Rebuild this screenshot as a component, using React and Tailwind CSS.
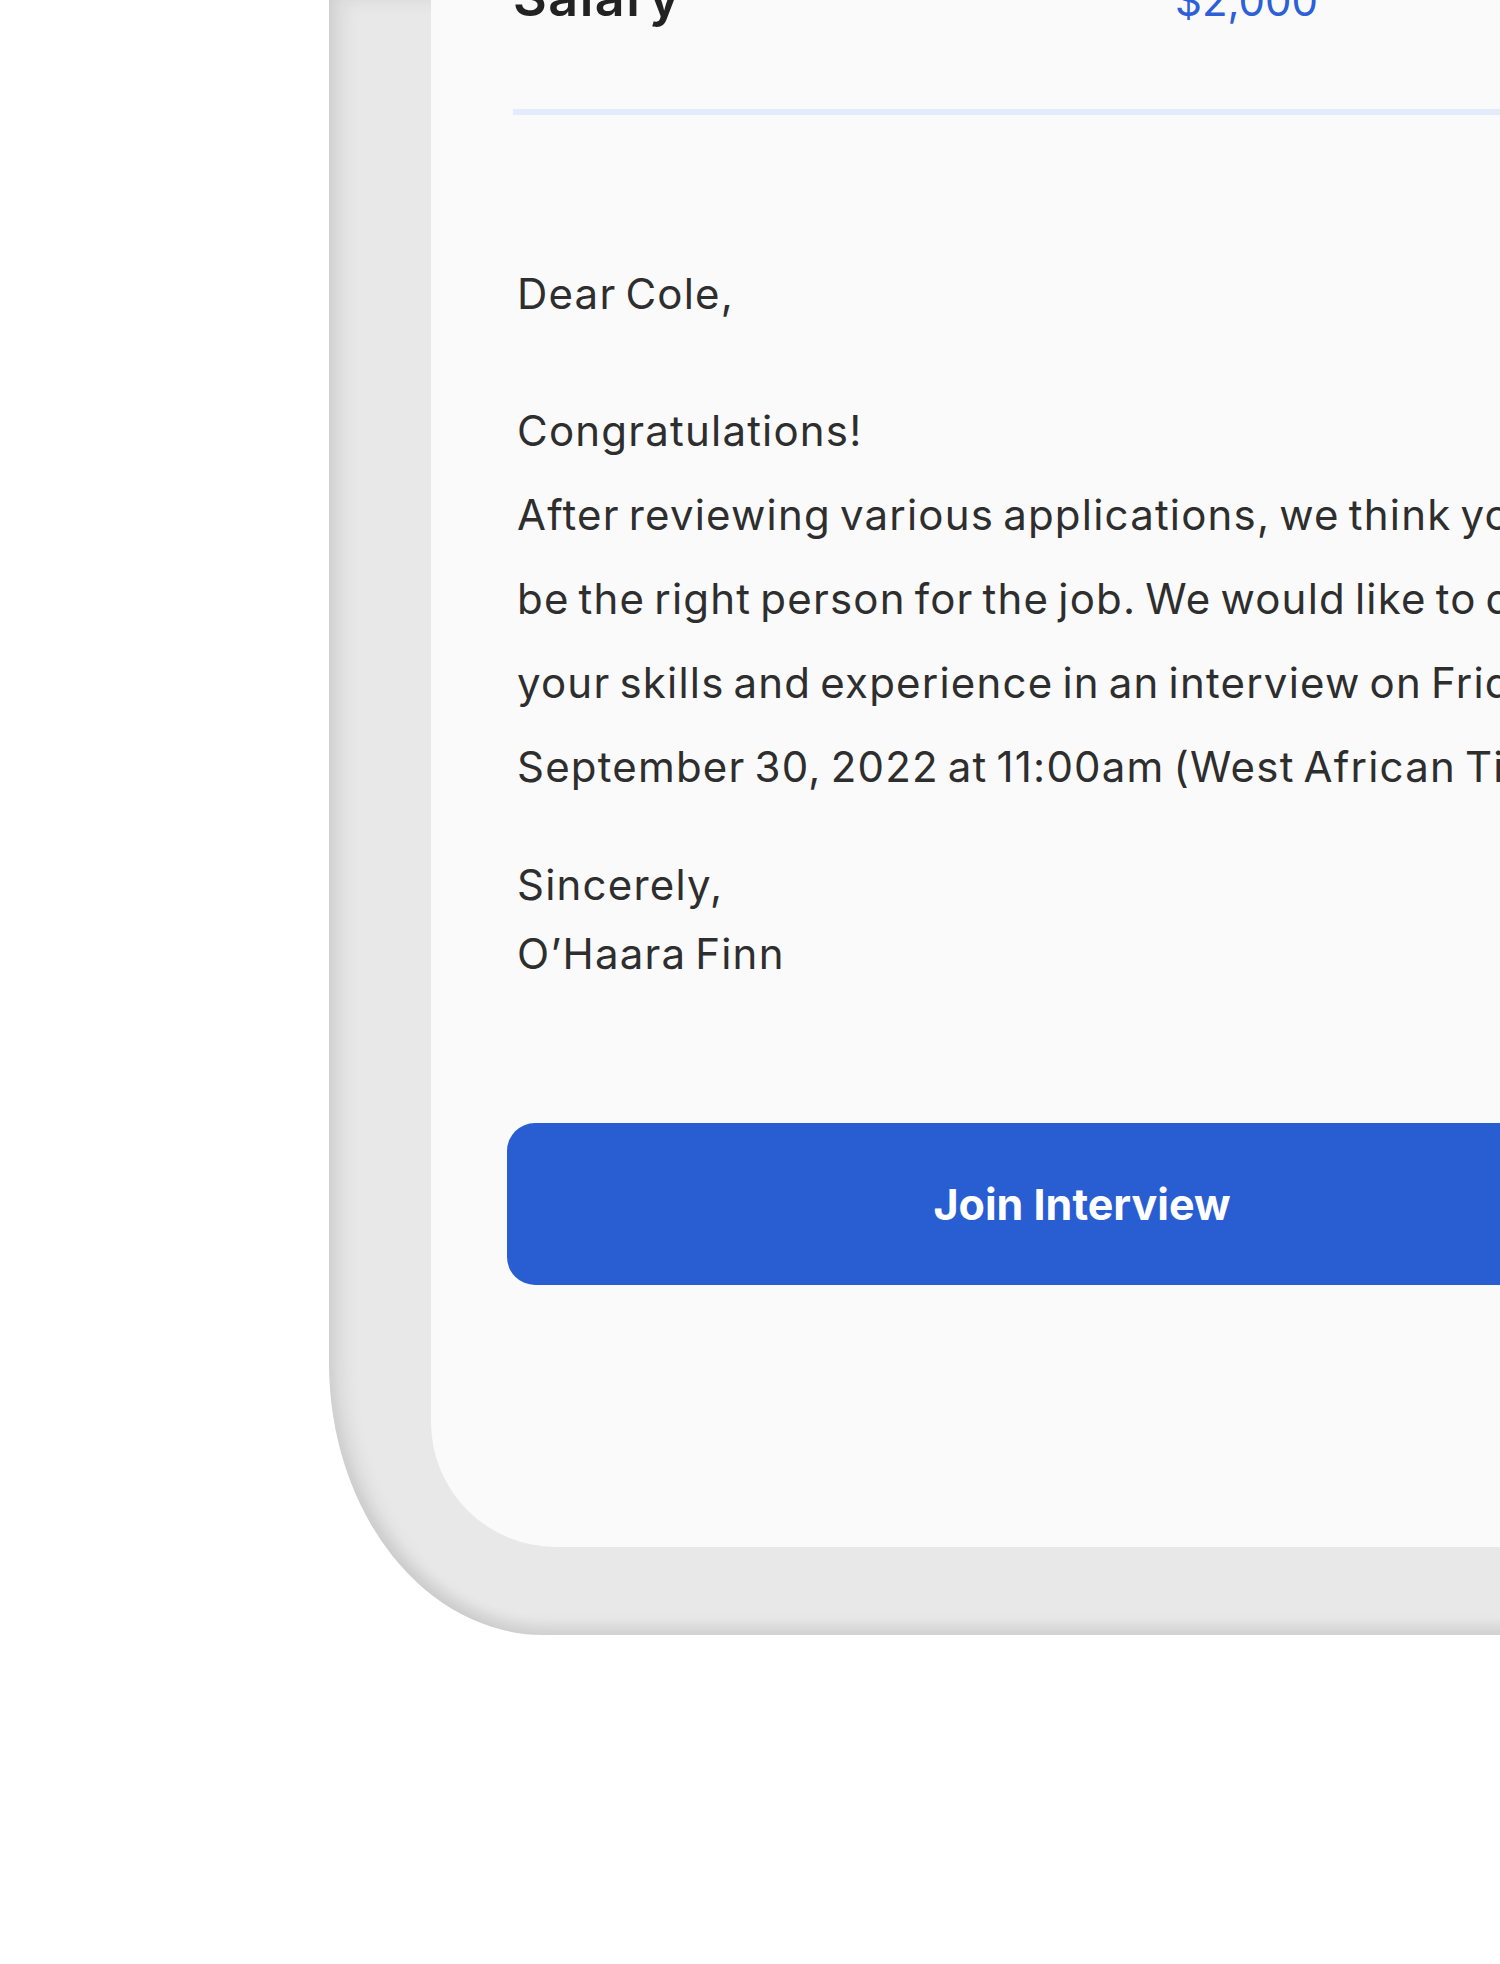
import React from "react";

const font = { fontFamily: "Inter, 'Open Sans', sans-serif" };

const App = () => {
  return (
    <div
      className="w-[1500px] h-[1964px] bg-white overflow-hidden"
      style={font}
    >
      {/* Phone frame, cut off at the top and right */}
      <div className="ml-[329px] w-[1500px] h-[1635px] bg-[#e8e8e8] pl-[102px] pb-[88px] rounded-bl-[215px_272px] shadow-[inset_14px_0_18px_rgba(0,0,0,0.07),inset_0_-10px_14px_rgba(0,0,0,0.07)]">
        <div className="h-full bg-[#fafafa] rounded-bl-[125px] pl-[82px] overflow-hidden">
          {/* Salary row */}
          <div className="flex items-baseline -mt-[28px]">
            <div className="w-[662px] text-[52px] leading-none font-semibold tracking-[1.5px] text-[#222]">
              Salary
            </div>
            <div className="text-[42px] leading-none text-[#2c5fd8]">
              $2,000
            </div>
          </div>

          <div className="mt-[85px] h-[6px] bg-[#e4ebfa]" />

          {/* Letter */}
          <div className="mt-[137px] pl-[4px] text-[42px] tracking-[1.2px] [word-spacing:-4px] text-[#2e2e2e] whitespace-nowrap">
            <p className="leading-[84px]">Dear Cole,</p>
            <p className="mt-[53px] leading-[84px]">Congratulations!</p>
            <p className="leading-[84px]">
              After reviewing various applications, we think you'll
              <br />
              be the right person for the job. We would like to discuss
              <br />
              your skills and experience in an interview on Friday,
              <br />
              September 30, 2022 at 11:00am (West African Time).
            </p>
            <p className="mt-[41px] leading-[69px]">
              Sincerely,
              <br />
              O’Haara Finn
            </p>
          </div>

          <button className="mt-[135px] -ml-[6px] w-[1150px] h-[162px] rounded-[28px] bg-[#295dd2] text-white text-[43px] font-bold">
            Join Interview
          </button>
        </div>
      </div>
    </div>
  );
};

export default App;
